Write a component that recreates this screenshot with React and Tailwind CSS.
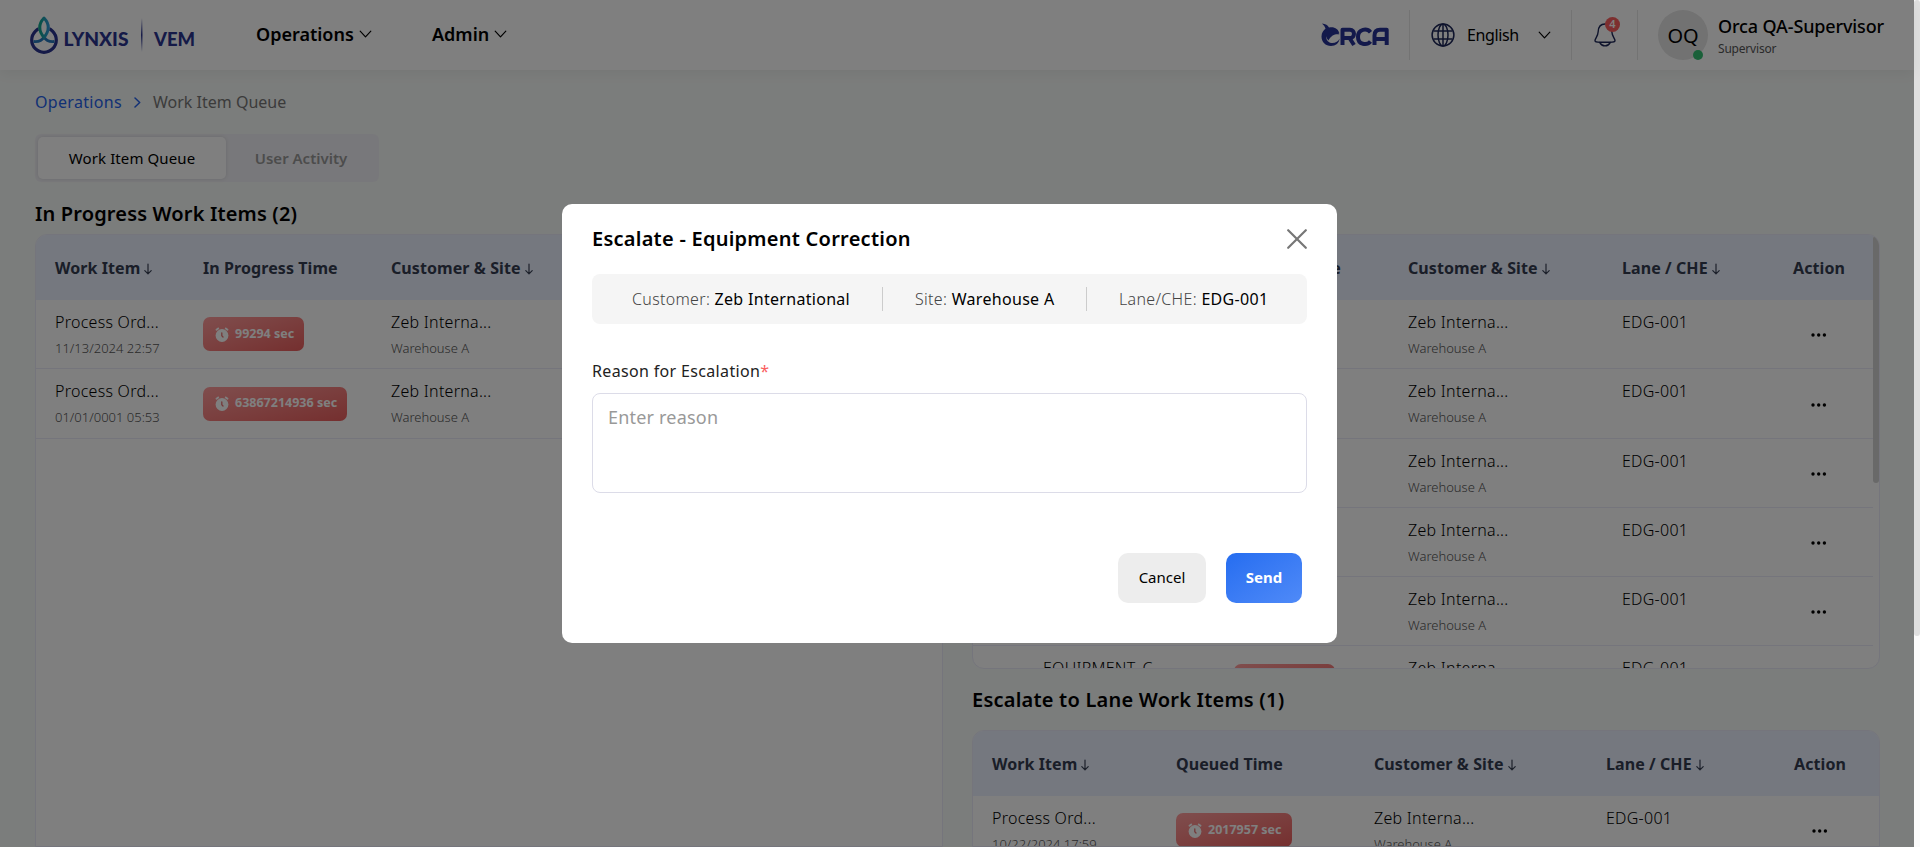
import React from "react";

const Chevron = ({ className = "" }) => (
  <svg width="13" height="8" viewBox="0 0 14 9" className={className} fill="none" stroke="#000" strokeWidth="1.3" strokeLinecap="round" strokeLinejoin="round">
    <path d="M1 1.3L7 7.8L13 1.3" />
  </svg>
);

const SortArrow = ({ className = "" }) => (
  <svg width="8" height="12" viewBox="0 0 8 12" className={className} fill="none" stroke="#3a4256" strokeWidth="1.2" strokeLinecap="round" strokeLinejoin="round">
    <path d="M4 1V10.6M0.8 7.6L4 10.8L7.2 7.6" />
  </svg>
);

const AlarmClock = () => (
  <svg width="14" height="15" viewBox="0 0 14 15" className="shrink-0">
    <circle cx="7" cy="8.500" r="6.400" fill="#fff" />
    <path d="M1.500 2.700L3.200 1.400M12.500 2.700L10.800 1.400" stroke="#fff" strokeWidth="1.900" strokeLinecap="round" />
    <path d="M6.800 5.800V8.800L8 10" stroke="#e87272" strokeWidth="1.300" fill="none" strokeLinecap="round" />
  </svg>
);

const LynxisLogo = () => (
  <svg width="166" height="40" viewBox="0 0 166 40">
    <defs>
      <linearGradient id="leaf" x1="0" y1="0" x2="1" y2="0">
        <stop offset="0" stopColor="#10a58c" />
        <stop offset="1" stopColor="#2f9ad6" />
      </linearGradient>
      <linearGradient id="rule" x1="0" y1="0" x2="0" y2="1">
        <stop offset="0" stopColor="#2b3490" stopOpacity="0" />
        <stop offset="0.5" stopColor="#2b3490" />
        <stop offset="1" stopColor="#2b3490" stopOpacity="0" />
      </linearGradient>
    </defs>
    <circle cx="14" cy="25" r="12.3" fill="none" stroke="#2b3490" strokeWidth="3.200" />
    <path d="M14 1C6.500 8 6.500 16 14 24C21.500 16 21.500 8 14 1Z" className="fill-white" />
    <path d="M3.500 26.500C8 27 12 25.500 14 22C16 25.500 20 27 24.500 26.500" fill="none" stroke="#2779bd" strokeWidth="2.800" />
    <path d="M14 3C8.300 9 8.300 15.500 14 22.500C19.700 15.500 19.700 9 14 3Z" fill="none" stroke="url(#leaf)" strokeWidth="2.900" strokeLinejoin="round" />
    <text x="33.500" y="31" fontFamily="Lato" fontWeight="900" fontSize="19" textLength="65" lengthAdjust="spacingAndGlyphs" fill="#2b3490">LYNXIS</text>
    <rect x="111" y="3" width="1.500" height="34" fill="url(#rule)" />
    <text x="124" y="31" fontFamily="Lato" fontWeight="900" fontSize="19" textLength="41" lengthAdjust="spacingAndGlyphs" fill="#2b3490">VEM</text>
  </svg>
);

const OrcaLogo = () => (
  <svg width="68" height="24" viewBox="0 0 68 24">
    <path d="M1 0.500C4.500 0.800 7 2 8 4.600C13 3.300 17.500 6 18.500 10.500C17 9.500 15.500 9 14 9.300C11 6.500 7 8.500 5.500 12C4.500 16 6.500 19.500 10.500 20C14 20.300 17.500 18.500 18.500 15.500C18.500 20 14.500 23 10 23C4.500 23 0.500 19 0.500 13.500C0.500 9.500 2.500 7 4.500 5.700C4 3.500 2.500 2 1 0.500Z" fill="#273397" />
    <path d="M5 8C10 4.500 16.500 7 18.300 11.500C14.500 10.800 10.500 12 7.500 17.500C5 15 4 11 5 8Z" fill="#273397" />
    <g fill="none" stroke="#273397" strokeWidth="4" strokeLinejoin="round">
      <path d="M21.500 22V6.700H29C34.300 6.700 34.300 15 29 15H23M28.500 15L33 22" />
      <path d="M49.500 9.200C46 5 37 5.700 37 13.900C37 22 46 22.600 49.500 18.500" />
      <path d="M53.500 22V12.500Q53.500 6.700 59 6.700H65.700V22M54 16H65" />
    </g>
  </svg>
);

const Globe = () => (
  <svg width="24" height="24" viewBox="0 0 24 24" fill="none" stroke="#1d2758" strokeWidth="1.5">
    <circle cx="12" cy="12" r="10.900" />
    <ellipse cx="12" cy="12" rx="5" ry="10.900" />
    <path d="M12 1.100V22.900M2.400 8H21.600M2.400 16H21.600" />
  </svg>
);

const Bell = () => (
  <svg width="22" height="24" viewBox="0 0 22 24" fill="none" stroke="#1d2758" strokeWidth="1.400" strokeLinejoin="round" strokeLinecap="round">
    <path d="M11 1C6.500 1 4.400 4.200 4.200 8.500C4 13.500 1 15.500 1 17.700C1 18.900 3.500 19.200 6 19.200H16C18.500 19.200 21 18.900 21 17.700C21 15.500 18 13.500 17.800 8.500C17.600 4.200 15.500 1 11 1Z" />
    <path d="M5.800 19.600C8 24 14 24 16.200 19.600" />
  </svg>
);

const Dots = () => (
  <svg width="16" height="4" viewBox="0 0 16 4" fill="#000">
    <circle cx="2" cy="2" r="1.700" />
    <circle cx="7.700" cy="2" r="1.700" />
    <circle cx="13.400" cy="2" r="1.700" />
  </svg>
);

const HeadCell = ({ children, sort, gap = "ml-1" }) => (
  <div className="flex items-center whitespace-nowrap text-base font-bold tracking-[0.08px] text-[#343c50]">
    {children}
    {sort && <SortArrow className={`mt-[3px] ${gap}`} />}
  </div>
);

const TimeBadge = ({ children, className = "" }) => (
  <div className={`flex h-[34px] items-center gap-[6px] whitespace-nowrap rounded-[7px] bg-linear-to-br from-[#ff9c9c] to-[#ea5e5e] pl-3 text-[12.5px] font-bold text-white ${className}`}>
    <AlarmClock />
    {children}
  </div>
);

const TwoLine = ({ top, bottom, className = "" }) => (
  <div className={`self-start whitespace-nowrap pt-[10px] font-light ${className}`}>
    <div className="text-base leading-6 tracking-[0.27px] text-black">{top}</div>
    {bottom && <div className="mt-[4px] text-[13px] leading-5 text-[#555]">{bottom}</div>}
  </div>
);

const leftCols = "grid grid-cols-[148px_188px_1fr] pl-[19px]";
const midCols = "grid grid-cols-[70px_191px_174px_214px_171px_1fr]";
const lowCols = "grid grid-cols-[184px_198px_232px_188px_1fr] pl-[19px]";

function Header() {
  return (
    <header className="z-10 flex h-[70px] w-full shrink-0 items-center bg-white shadow-[0_4px_12px_rgba(0,0,0,0.05)]">
      <div className="ml-[30px] w-[226px]"><LynxisLogo /></div>
      <nav className="flex flex-1 items-center pb-[2px] text-lg font-semibold text-black">
        <div className="flex w-[176px] items-center gap-[5px]">Operations <Chevron /></div>
        <div className="flex items-center gap-[5px]">Admin <Chevron /></div>
      </nav>
      <div className="flex h-[50px] items-center">
        <div className="flex h-full w-[89px] items-center border-r border-[#e6e6e6]"><OrcaLogo /></div>
        <div className="flex h-full w-[162px] items-center border-r border-[#e6e6e6] pl-[21px] text-base font-[450] text-black">
          <Globe />
          <span className="ml-3 w-[71px] tracking-[-0.4px]">English</span>
          <Chevron />
        </div>
        <div className="flex h-full w-[66px] items-center border-r border-[#e6e6e6] pl-[22px]">
          <div className="relative">
            <Bell />
            <span className="absolute -top-[6px] left-[11px] flex size-[15px] items-center justify-center rounded-full bg-[#fa5f5f] text-[11px] font-semibold text-white">4</span>
          </div>
        </div>
        <div className="relative ml-5 flex size-[50px] items-center justify-center rounded-full bg-[#e4e4e4] pt-[2px] text-xl text-black">
          OQ
          <span className="absolute bottom-0 right-[5px] size-[10px] rounded-full bg-[#35c173]" />
        </div>
        <div className="ml-[10px] w-[196px] whitespace-nowrap">
          <div className="text-lg font-medium leading-6 tracking-[-0.14px] text-black">Orca QA-Supervisor</div>
          <div className="mt-[3px] text-xs leading-4 tracking-[-0.2px] text-[#555]">Supervisor</div>
        </div>
      </div>
    </header>
  );
}

function LeftPanel() {
  const rows = [
    ["11/13/2024 22:57", "99294 sec", "w-[101px]"],
    ["01/01/0001 05:53", "63867214936 sec", "w-[144px]"],
  ];
  return (
    <section className="flex w-[908px] flex-col">
      <h2 className="h-[40px] text-xl font-semibold leading-[40px] tracking-[0.15px] text-black">In Progress Work Items (2)</h2>
      <div className="flex-1 overflow-hidden rounded-t-xl border border-[#eaebf8] bg-white">
        <div className={`${leftCols} h-[65.2px] bg-[#eaf0ff]`}>
          <HeadCell sort>Work Item</HeadCell>
          <HeadCell>In Progress Time</HeadCell>
          <HeadCell sort>Customer &amp; Site</HeadCell>
        </div>
        {rows.map(([date, time, width]) => (
          <div key={date} className={`${leftCols} h-[69.25px] items-center border-b border-[#eaebf8]`}>
            <TwoLine top="Process Ord..." bottom={date} />
            <TimeBadge className={width}>{time}</TimeBadge>
            <TwoLine top="Zeb Interna..." bottom="Warehouse A" />
          </div>
        ))}
      </div>
    </section>
  );
}

function QueuedPanel() {
  return (
    <div className="mt-[40px] flex h-[435px] overflow-hidden rounded-xl border border-[#eaebf8] bg-white">
      <div className="h-full flex-1 overflow-hidden">
        <div className={`${midCols} h-[65.2px] bg-[#eaf0ff]`}>
          <div />
          <div />
          <HeadCell>Queued Time</HeadCell>
          <HeadCell sort>Customer &amp; Site</HeadCell>
          <HeadCell sort>Lane / CHE</HeadCell>
          <HeadCell>Action</HeadCell>
        </div>
        {[0, 1, 2, 3, 4, 5].map((i) => (
          <div key={i} className={`${midCols} h-[69.25px] items-center border-b border-[#eaebf8]`}>
            <div />
            {i === 5 ? <TwoLine top="EQUIPMENT_C..." /> : <div />}
            {i === 5 ? <TimeBadge className="w-[101px]">99294 sec</TimeBadge> : <div />}
            <TwoLine top="Zeb Interna..." bottom="Warehouse A" />
            <TwoLine top="EDG-001" />
            <div className="pl-[18px] pt-[2px]"><Dots /></div>
          </div>
        ))}
      </div>
      <div className="w-[6px] pt-px">
        <div className="h-[247px] rounded-full bg-[#d2d3d2]" />
      </div>
    </div>
  );
}

function EscalatePanel() {
  return (
    <>
      <h2 className="h-[61px] pt-[16px] text-xl font-semibold leading-[30px] tracking-[0.22px] text-black">Escalate to Lane Work Items (1)</h2>
      <div className="flex-1 overflow-hidden rounded-t-xl border border-[#eaebf8] bg-white">
        <div className={`${lowCols} h-[65.2px] bg-[#eaf0ff]`}>
          <HeadCell sort>Work Item</HeadCell>
          <HeadCell>Queued Time</HeadCell>
          <HeadCell sort>Customer &amp; Site</HeadCell>
          <HeadCell sort>Lane / CHE</HeadCell>
          <HeadCell>Action</HeadCell>
        </div>
        <div className={`${lowCols} h-[69.25px] items-center border-b border-[#eaebf8]`}>
          <TwoLine top="Process Ord..." bottom="10/22/2024 17:59" />
          <TimeBadge className="w-[116px]">2017957 sec</TimeBadge>
          <TwoLine top="Zeb Interna..." bottom="Warehouse A" />
          <TwoLine top="EDG-001" />
          <div className="pl-[18px] pt-[2px]"><Dots /></div>
        </div>
      </div>
    </>
  );
}

function Modal() {
  return (
    <div className="absolute left-[562px] top-[204px] flex h-[439px] w-[775px] flex-col rounded-[10px] bg-white px-[30px]">
      <div className="flex h-[70px] items-center justify-between">
        <h3 className="text-xl font-semibold tracking-[0.25px] text-black">Escalate - Equipment Correction</h3>
        <svg width="20" height="20" viewBox="0 0 20 20" fill="none" stroke="#777" strokeWidth="2.200" strokeLinecap="round">
          <path d="M1.200 1.200L18.800 18.800M18.800 1.200L1.200 18.800" />
        </svg>
      </div>
      <div className="flex h-[50px] items-center whitespace-nowrap rounded-lg bg-[#f5f5f5] pl-10 text-base font-[450] tracking-[0.3px] text-black">
        <div className="w-[250px]"><span className="font-light tracking-[0.32px] text-[#444]">Customer: </span>Zeb International</div>
        <div className="h-6 w-px bg-[#ccc]" />
        <div className="w-[203px] pl-8"><span className="font-light tracking-[0.32px] text-[#444]">Site: </span>Warehouse A</div>
        <div className="h-6 w-px bg-[#ccc]" />
        <div className="pl-8"><span className="font-light tracking-[0.32px] text-[#444]">Lane/CHE: </span>EDG-001</div>
      </div>
      <label className="mt-[35px] h-[34px] text-base font-[450] leading-6 tracking-[0.34px] text-[#222]">Reason for Escalation<span className="text-[#fa5f5f]">*</span></label>
      <textarea placeholder="Enter reason" className="h-[100px] shrink-0 resize-none rounded-lg border border-[#dcdce8] px-[15px] py-[9px] text-lg leading-7 tracking-[0.2px] outline-none placeholder:text-[#999]" />
      <div className="mt-[60px] flex justify-end gap-5 pr-[5px] text-[15px]">
        <button className="h-[50px] w-[88px] rounded-[10px] bg-[#ededed] pb-[2px] font-[450] text-black">Cancel</button>
        <button className="h-[50px] w-[76px] rounded-[10px] bg-linear-to-br from-[#256df0] to-[#4f8af8] pb-[2px] font-bold text-white">Send</button>
      </div>
    </div>
  );
}

export default function App() {
  return (
    <div className="relative flex h-[847px] w-full overflow-hidden bg-[#fafafa] font-['Noto_Sans',sans-serif]">
      <div className="flex h-full w-[1914px] flex-col bg-[#f7faf8]">
        <Header />
        <main className="flex min-h-0 flex-1 flex-col pl-[35px]">
          <div className="mt-[20px] flex h-6 items-center text-base">
            <span className="w-[99px] font-[450] tracking-[0.32px] text-[#2563eb]">Operations</span>
            <svg width="7" height="11" viewBox="0 0 7 11" fill="none" stroke="#2563eb" strokeWidth="1.500" strokeLinecap="round" strokeLinejoin="round"><path d="M1 1L5.700 5.500L1 10" /></svg>
            <span className="ml-3 text-[#777]">Work Item Queue</span>
          </div>
          <div className="mt-[20px] flex h-12 w-[344px] items-center rounded-md bg-[#f1f1f6] p-[3px] text-[15px]">
            <div className="flex h-[42px] w-[188px] items-center justify-center rounded-[5px] bg-white font-[450] tracking-[0.1px] text-black shadow-[0_0_4px_rgba(0,0,0,0.12)]">Work Item Queue</div>
            <div className="flex flex-1 items-center justify-center font-semibold text-[#999]">User Activity</div>
          </div>
          <div className="mt-[12px] flex min-h-0 flex-1 gap-[29px]">
            <LeftPanel />
            <section className="flex w-[908px] flex-col">
              <QueuedPanel />
              <EscalatePanel />
            </section>
          </div>
        </main>
      </div>
      <div className="h-[636px] w-[6px] rounded-full bg-[#dfdfdf]" />
      <div className="absolute inset-y-0 left-0 z-20 w-[1914px] bg-black/50">
        <Modal />
      </div>
    </div>
  );
}
